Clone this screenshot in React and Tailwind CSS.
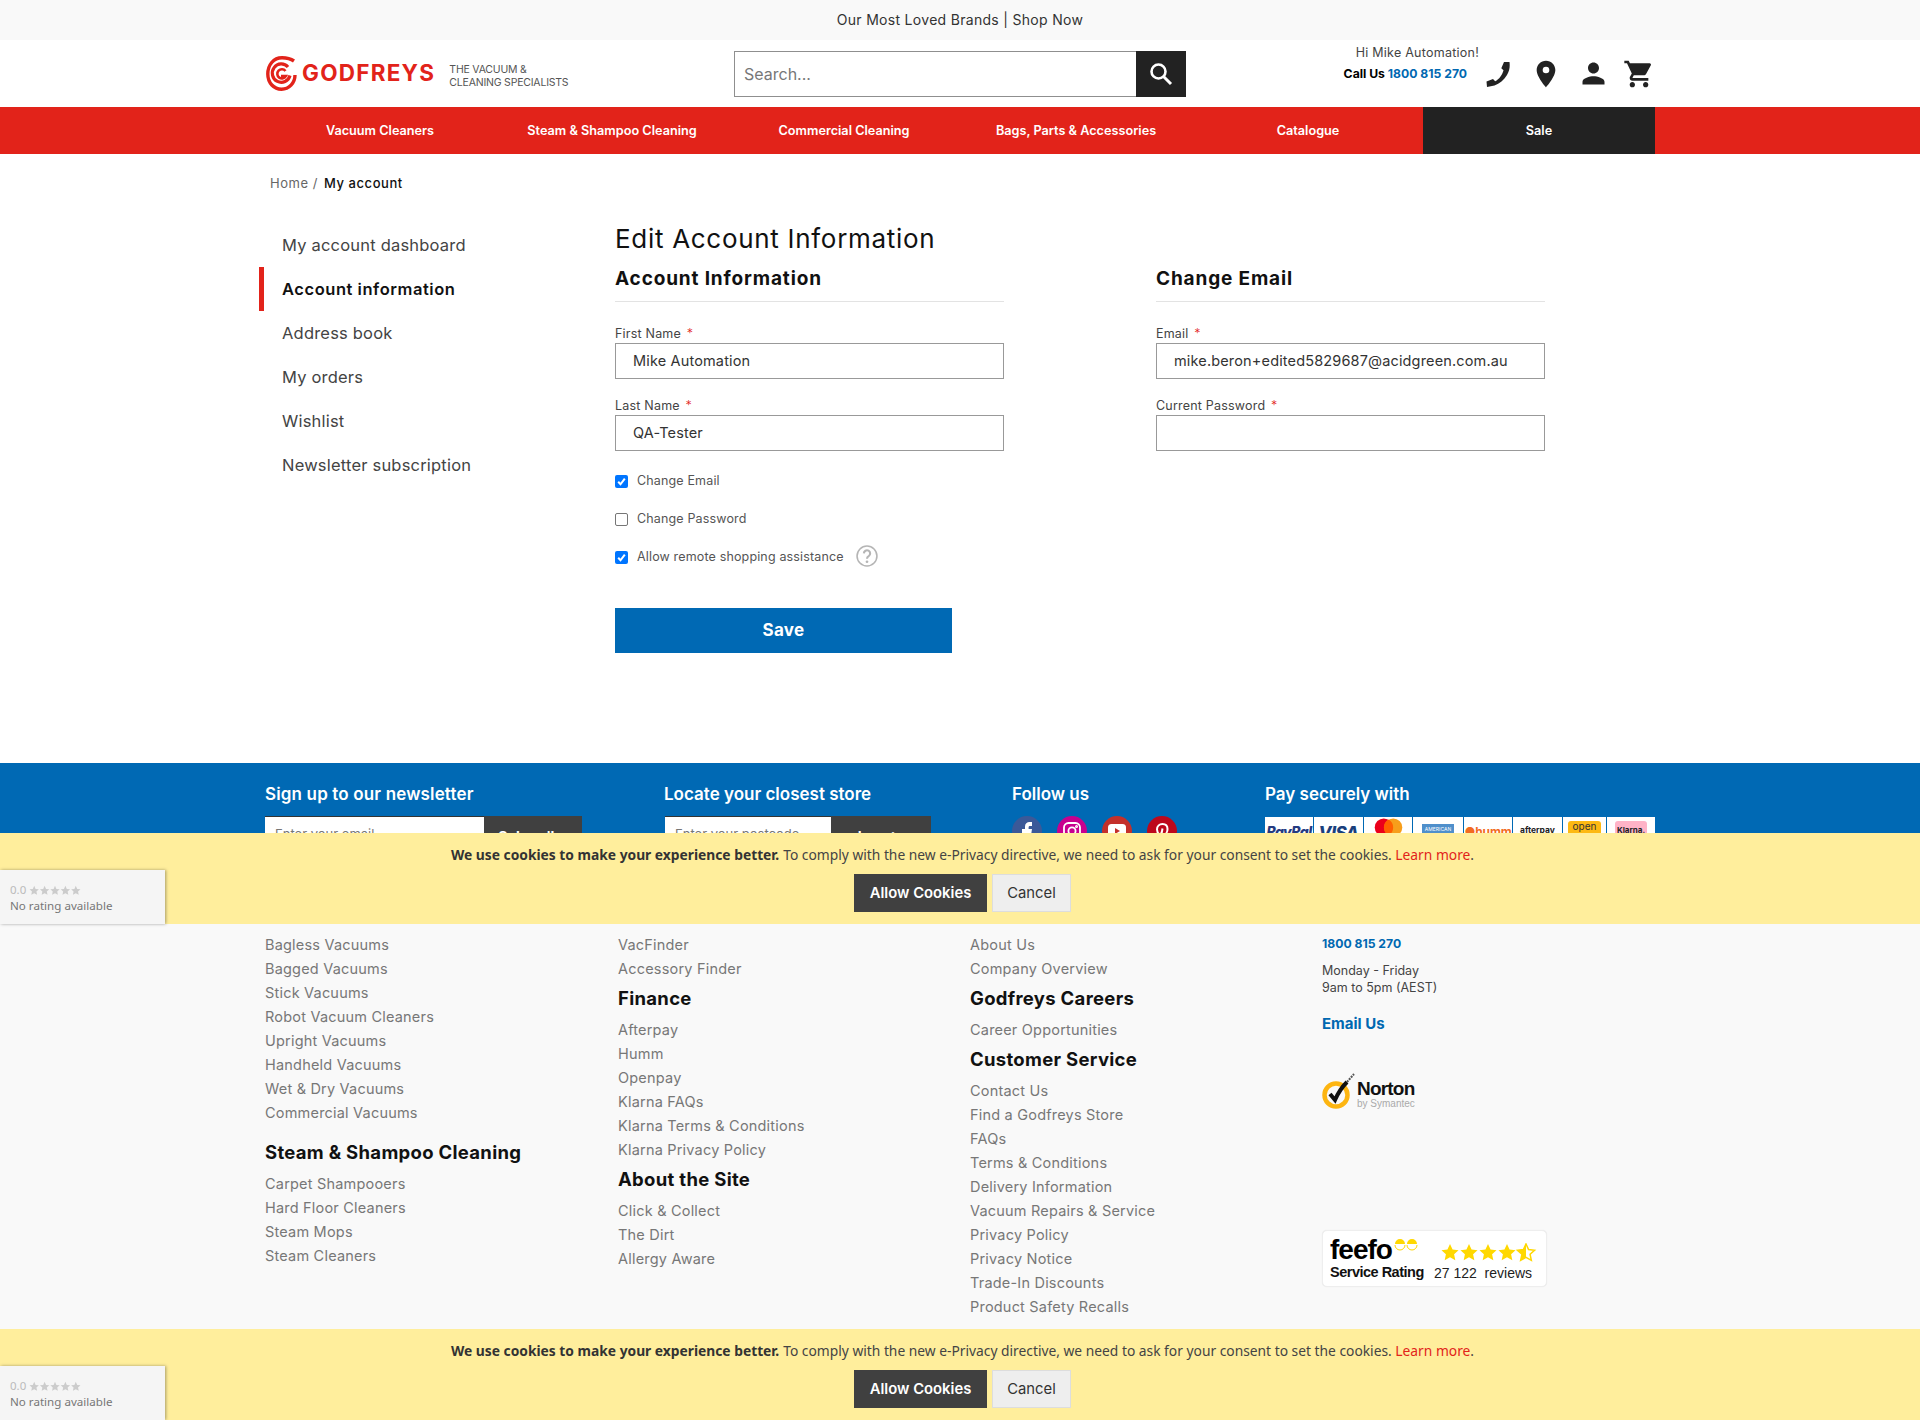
import React from "react";
import { MdLocationOn, MdPerson, MdShoppingCart } from "react-icons/md";

const nav = ["Vacuum Cleaners", "Steam & Shampoo Cleaning", "Commercial Cleaning", "Bags, Parts & Accessories", "Catalogue"];
const side = ["My account dashboard", "Account information", "Address book", "My orders", "Wishlist", "Newsletter subscription"];
const STAR = "M10 1l2.700 5.900 6.300.7-4.700 4.300 1.300 6.300L10 15.100 4.400 18.200l1.300-6.300L1 7.600l6.300-.7z";

function Spiral() {
  return (
    <svg width="31" height="35" viewBox="0 0 31 35" fill="none" stroke="#e2231a">
      <path d="M28 5C24.500 2.500 20 1.700 16 1.700 7.500 1.700 1.800 9 1.800 18 1.800 27 8 33.200 15.500 33.200 23 33.200 29 27 29 19" strokeWidth="3.400" />
      <path d="M24 19.500A9 9.200 0 1 1 22 11" strokeWidth="3.200" />
      <path d="M19.500 15A4.600 4.600 0 1 0 20 20H15" strokeWidth="2.600" />
    </svg>
  );
}

function Phone() {
  return (
    <svg width="24" height="26" viewBox="0 0 24 26" fill="#222">
      <path d="M18 1h5.500c.6 5 0 9-2.500 13-3 5-7.500 8.500-12.500 10.500L1 26l-.5-5.500L7 18l2.200 2.300c4-2 7-6.200 8.300-11L15.300 7.300z" />
    </svg>
  );
}

function Field({ label, value, gap }) {
  return (
    <div className={gap}>
      <div className="h-[20px] pt-[1px] text-[12.5px] leading-[20px] text-[#444] tracking-[0.2px]">
        {label} <span className="text-[#e2231a] ml-[2px] font-light">*</span>
      </div>
      <div className="h-[36px] border border-[#999] px-[17px] pb-[1px] flex items-center text-[14.5px] text-[#333] tracking-[0.15px]">{value}</div>
    </div>
  );
}

function Check({ checked, label, children }) {
  return (
    <div className="h-[38px] flex items-center">
      {checked ? (
        <span className="w-[13px] h-[13px] rounded-[2px] bg-[#0075ff] flex items-center justify-center">
          <svg width="11" height="11" viewBox="0 0 11 11" fill="none" stroke="#fff" strokeWidth="2"><path d="M2.200 5.800 4.500 8.300 8.800 2.600" /></svg>
        </span>
      ) : (
        <span className="w-[13px] h-[13px] rounded-[2px] border border-[#767676] bg-white"></span>
      )}
      <span className="ml-[9px] text-[12.5px] text-[#555] tracking-[0.15px]">{label}</span>
      {children}
    </div>
  );
}

function LinkList({ items }) {
  return items.map((t) => (
    <div key={t} className="h-[24px] leading-[24px] text-[14.5px] tracking-[0.2px] text-[#777]">{t}</div>
  ));
}

function Head({ children, cls }) {
  return <div className={"h-[30px] leading-[30px] text-[18.5px] tracking-[0.3px] font-bold text-[#111] " + cls}>{children}</div>;
}

function CookieBar({ cls }) {
  return (
    <div className={"absolute left-0 right-0 h-[91px] bg-[#ffee9c] flex flex-col items-center " + cls}>
      <div className="h-[44px] pl-[5px] flex items-center text-[13.8px] text-[#444] [font-family:'Noto_Sans',sans-serif]">
        <b className="font-bold text-[#333] mr-[4px]">We use cookies to make your experience better.</b>
        To comply with the new e-Privacy directive, we need to ask for your consent to set the cookies.&nbsp;
        <span className="text-[#e2231a]">Learn more</span>.
      </div>
      <div className="flex mt-[-3px] ml-[5px]">
        <div className="w-[133px] h-[38px] bg-[#404040] text-white text-[14.8px] font-semibold flex items-center justify-center">Allow Cookies</div>
        <div className="ml-[5px] w-[79px] h-[38px] bg-[#eeeeee] border border-[#dddddd] text-[#333] text-[14.8px] flex items-center justify-center">Cancel</div>
      </div>
      <div className="absolute left-0 bottom-0 w-[165px] h-[54px] bg-[#f5f5f5] shadow-[1px_0_3px_rgba(0,0,0,0.35)] pl-[10px] pt-[12px] text-[#777] [font-family:'Noto_Sans',sans-serif]">
        <div className="flex items-center h-[16px] text-[11.5px] text-[#bbb] leading-none">
          0.0
          <svg className="ml-[3px]" width="52" height="11" viewBox="0 0 100 20" fill="#cccccc">
            {[0, 20, 40, 60, 80].map((x) => <path key={x} d={STAR} transform={`translate(${x} 0)`} />)}
          </svg>
        </div>
        <div className="text-[11.6px] leading-[16px]">No rating available</div>
      </div>
    </div>
  );
}

function PayCell({ w, children }) {
  return <div className={"bg-white h-[40px] flex justify-center overflow-hidden shrink-0 " + w}>{children}</div>;
}

export default function App() {
  return (
    <div className="relative h-[1420px] overflow-hidden bg-white [font-family:Inter,sans-serif]">
      {/* top promo */}
      <div className="h-[40px] bg-[#f9f9f9] pb-[2px] flex items-center justify-center text-[14px] tracking-[0.3px] text-[#333]">Our Most Loved Brands | Shop Now</div>

      {/* header */}
      <div className="h-[67px] w-[1390px] mx-auto pl-[1px] relative flex">
        <div className="flex items-center h-[67px]">
          <Spiral />
          <span className="ml-[5px] text-[22.5px] leading-none font-bold tracking-[1.25px] text-[#e2231a]">GODFREYS</span>
          <div className="ml-[14px] mt-[4px] text-[10.5px] leading-[13px] text-[#555] tracking-[-0.2px]">THE VACUUM &amp;<br />CLEANING SPECIALISTS</div>
        </div>
        <div className="absolute left-[469px] top-[11px] w-[452px] h-[46px] border border-[#8f8f8f] flex items-center pl-[9px] text-[16px] text-[#777]">
          Search...
          <div className="absolute right-[-1px] top-[-1px] w-[50px] h-[46px] bg-[#222] flex items-center justify-center">
            <svg width="26" height="26" viewBox="0 0 26 26" fill="none" stroke="#fff" strokeWidth="2.600">
              <circle cx="10.500" cy="10.500" r="7" />
              <path d="M15.500 15.500 23 23" strokeWidth="3" />
            </svg>
          </div>
        </div>
        <div className="absolute right-[176px] top-[3px] w-[170px] text-right">
          <div className="h-[20px] leading-[20px] text-[12.5px] tracking-[0.25px] text-[#444]">Hi Mike Automation!</div>
          <div className="h-[20px] leading-[22px] text-[12.2px] font-bold text-black pr-[12px]">
            Call Us <span className="text-[#0068b1]">1800 815 270</span>
          </div>
        </div>
        <div className="absolute left-[1221px] top-[17px] flex items-center h-[33px] text-[#222]">
          <Phone />
          <MdLocationOn size={32} className="ml-[20px]" />
          <MdPerson size={33} className="ml-[15px]" />
          <MdShoppingCart size={32} className="ml-[13px]" />
        </div>
      </div>

      {/* nav */}
      <div className="h-[47px] bg-[#e2231a]">
        <div className="w-[1392px] ml-[263px] grid grid-cols-6 h-full">
          {nav.map((n) => (
            <div key={n} className="flex items-center justify-center pl-[2px] text-white text-[12.7px] font-semibold">{n}</div>
          ))}
          <div className="flex items-center justify-center bg-[#222] text-white text-[12.7px] font-semibold">Sale</div>
        </div>
      </div>

      {/* breadcrumb */}
      <div className="w-[1390px] mx-auto h-[58px] pl-[5px] pt-[2px] flex items-center text-[13px] tracking-[0.55px]">
        <span className="text-[#666]">Home /</span>
        <span className="ml-[6px] font-medium text-[#111]">My account</span>
      </div>

      {/* main */}
      <div className="h-[551px] flex pl-[259px]">
        <div className="w-[356px] pt-[11px]">
          {side.map((s) => (
            <div
              key={s}
              className={
                "h-[44px] flex items-center pl-[18px] text-[16.5px] " +
                (s === "Account information" ? "border-l-[5px] border-[#e2231a] font-semibold tracking-[0.55px] text-[#111]" : "border-l-[5px] border-transparent tracking-[0.2px] text-[#444]")
              }
            >
              {s}
            </div>
          ))}
        </div>
        <div>
          <h1 className="h-[32px] mt-[11px] leading-[32px] text-[26px] text-[#111] tracking-[0.7px]">Edit Account Information</h1>
          <div className="flex mt-[7px]">
            <div className="w-[389px]">
              <div className="h-[40px] border-b border-[#e3e3e3] text-[19px] leading-[30px] font-bold tracking-[0.85px] text-[#111] pt-[2px]">Account Information</div>
              <Field label="First Name" value="Mike Automation" gap="mt-[21px]" />
              <Field label="Last Name" value="QA-Tester" gap="mt-[16px]" />
              <div className="mt-[10px] pt-[1px]">
                <Check checked label="Change Email" />
                <Check label="Change Password" />
                <Check checked label="Allow remote shopping assistance">
                  <svg className="ml-[12px] mt-[-2px]" width="22" height="22" viewBox="0 0 21 21" fill="none">
                    <circle cx="10.500" cy="10.500" r="9.500" stroke="#b5b5b5" strokeWidth="1.500" />
                    <path d="M7.500 8a3 3 0 1 1 4.600 2.600c-1 .6-1.600 1.200-1.600 2.600" stroke="#b5b5b5" strokeWidth="2" />
                    <circle cx="10.500" cy="16" r="1.300" fill="#b5b5b5" />
                  </svg>
                </Check>
              </div>
              <div className="mt-[32px] w-[337px] h-[45px] pt-[1px] bg-[#0069b4] text-white font-bold text-[17px] tracking-[0.3px] flex items-center justify-center">Save</div>
            </div>
            <div className="w-[389px] ml-[152px]">
              <div className="h-[40px] border-b border-[#e3e3e3] text-[19px] leading-[30px] font-bold tracking-[0.85px] text-[#111] pt-[2px]">Change Email</div>
              <Field label="Email" value="mike.beron+edited5829687@acidgreen.com.au" gap="mt-[21px]" />
              <Field label="Current Password " value="" gap="mt-[16px]" />
            </div>
          </div>
        </div>
      </div>

      {/* blue band */}
      <div className="h-[118px] bg-[#0069b4] pl-[265px] flex text-white">
        <div className="w-[399px]">
          <div className="h-[30px] mt-[16px] leading-[30px] text-[17px] tracking-[0.15px] font-semibold">Sign up to our newsletter</div>
          <div className="mt-[7px] flex h-[42px] w-[317px]">
            <div className="w-[219px] bg-white border-t border-[#333] pl-[10px] pt-[8px] text-[13px] text-[#777]">Enter your email</div>
            <div className="w-[98px] bg-[#404040] text-[14px] font-bold flex justify-center pt-[10px]">Subscribe</div>
          </div>
        </div>
        <div className="w-[348px]">
          <div className="h-[30px] mt-[16px] leading-[30px] text-[17px] font-semibold">Locate your closest store</div>
          <div className="mt-[7px] ml-[1px] flex h-[42px] w-[266px]">
            <div className="w-[166px] bg-white border-t border-[#333] pl-[10px] pt-[8px] text-[13px] text-[#777]">Enter your postcode</div>
            <div className="w-[100px] bg-[#404040] text-[14px] font-bold flex justify-center pt-[10px]">Locate</div>
          </div>
        </div>
        <div className="w-[253px]">
          <div className="h-[30px] mt-[16px] leading-[30px] text-[17px] font-semibold">Follow us</div>
          <div className="mt-[7px] flex gap-[15px]">
            <div className="w-[30px] h-[30px] rounded-full bg-[#3b5998] flex justify-center pt-[5px]">
              <svg width="12" height="22" viewBox="0 0 12 22" fill="#fff"><path d="M4 22V12H1V8h3V5.500C4 2.500 6 1 8.500 1H11v4H9C8 5 7.600 5.500 7.600 6.500V8H11l-.6 4H7.600v10z" /></svg>
            </div>
            <div className="w-[30px] h-[30px] rounded-full bg-[#c8008f] flex justify-center pt-[6px]">
              <svg width="18" height="18" viewBox="0 0 18 18" fill="none" stroke="#fff" strokeWidth="1.800"><rect x="1" y="1" width="16" height="16" rx="4.500" /><circle cx="9" cy="9" r="3.600" /><circle cx="13.500" cy="4.500" r=".6" /></svg>
            </div>
            <div className="w-[30px] h-[30px] rounded-full bg-[#c4302b] flex justify-center pt-[8px]">
              <svg width="18" height="14" viewBox="0 0 18 14"><rect width="18" height="14" rx="3.500" fill="#fff" /><path d="M7 4l5 3-5 3z" fill="#c4302b" /></svg>
            </div>
            <div className="w-[30px] h-[30px] rounded-full bg-[#bd081c] flex justify-center pt-[6px]">
              <svg width="14" height="22" viewBox="0 0 14 22" fill="none" stroke="#fff" strokeWidth="2"><path d="M4.500 13C2.500 11 2 9.500 2 7.500 2 4 4.500 2 7.500 2S12.500 4 12.500 7c0 3-1.500 5.500-4 5.500-1.500 0-2.500-1-2-2.500M7.500 6.500 5 20" /></svg>
            </div>
          </div>
        </div>
        <div>
          <div className="h-[30px] mt-[16px] leading-[30px] text-[17px] font-semibold">Pay securely with</div>
          <div className="mt-[8px] flex gap-[1px] w-[390px]">
            <PayCell w="w-[48px]"><span className="mt-[4px] text-[14px] font-extrabold italic text-[#253b80] tracking-[-0.5px]">PayPal</span></PayCell>
            <PayCell w="w-[49px]"><span className="mt-[4px] text-[17px] font-extrabold italic text-[#1a3f7c] tracking-[-0.5px]">VISA</span></PayCell>
            <PayCell w="w-[48px]">
              <svg width="29" height="19" viewBox="0 0 30 20" className="mt-[1px]"><circle cx="10" cy="10" r="9.500" fill="#eb001b" /><circle cx="20" cy="10" r="9.500" fill="#f79e1b" /><path d="M15 1.700a9.500 9.500 0 0 1 0 16.600a9.500 9.500 0 0 1 0-16.600" fill="#ff5f00" /></svg>
            </PayCell>
            <PayCell w="w-[50px]"><div className="mt-[7px] w-[32px] h-[30px] bg-[#4f8fcb] text-white text-[5px] text-center leading-[6px] pt-[2px]">AMERICAN<br />EXPRESS</div></PayCell>
            <PayCell w="w-[48px]"><span className="mt-[6px] text-[12px] font-bold text-[#f26b21] tracking-[-0.2px]">●humm</span></PayCell>
            <PayCell w="w-[49px]"><span className="mt-[7px] text-[8.5px] font-bold text-[#222]">afterpay</span></PayCell>
            <PayCell w="w-[43px]"><div className="mt-[4px] w-[33px] h-[30px] rounded-[3px] bg-[#fdb913] text-[#333] text-[10px] text-center leading-[10px]">open<br />pay</div></PayCell>
            <PayCell w="w-[48px]"><div className="mt-[4px] w-[32px] h-[30px] rounded-[3px] bg-[#ffb3c7] text-[#222] text-[8px] font-bold text-center pt-[3px]">Klarna.</div></PayCell>
          </div>
        </div>
      </div>

      {/* footer */}
      <div className="h-[539px] bg-[#f9f9f9] pl-[265px] pt-[52px] grid grid-cols-[353px_352px_352px_1fr]">
        <div>
          <LinkList items={["Bagless Vacuums", "Bagged Vacuums", "Stick Vacuums", "Robot Vacuum Cleaners", "Upright Vacuums", "Handheld Vacuums", "Wet & Dry Vacuums", "Commercial Vacuums"]} />
          <Head cls="mt-[12px] mb-[5px]">Steam &amp; Shampoo Cleaning</Head>
          <LinkList items={["Carpet Shampooers", "Hard Floor Cleaners", "Steam Mops", "Steam Cleaners"]} />
        </div>
        <div>
          <LinkList items={["VacFinder", "Accessory Finder"]} />
          <Head cls="mt-[2px] mb-[5px]">Finance</Head>
          <LinkList items={["Afterpay", "Humm", "Openpay", "Klarna FAQs", "Klarna Terms & Conditions", "Klarna Privacy Policy"]} />
          <Head cls="mt-[2px] mb-[5px]">About the Site</Head>
          <LinkList items={["Click & Collect", "The Dirt", "Allergy Aware"]} />
        </div>
        <div>
          <LinkList items={["About Us", "Company Overview"]} />
          <Head cls="mt-[2px] mb-[5px]">Godfreys Careers</Head>
          <LinkList items={["Career Opportunities"]} />
          <Head cls="mt-[2px] mb-[5px]">Customer Service</Head>
          <LinkList items={["Contact Us", "Find a Godfreys Store", "FAQs", "Terms & Conditions", "Delivery Information", "Vacuum Repairs & Service", "Privacy Policy", "Privacy Notice", "Trade-In Discounts", "Product Safety Recalls"]} />
        </div>
        <div>
          <div className="h-[22px] leading-[22px] text-[12.2px] font-bold text-[#0068b1]">1800 815 270</div>
          <div className="mt-[7px] text-[12.5px] leading-[17px] text-[#444]">Monday - Friday<br />9am to 5pm (AEST)</div>
          <div className="mt-[18px] h-[20px] leading-[20px] text-[15px] font-bold text-[#0068b1]">Email Us</div>
          <div className="mt-[39px] flex items-end h-[37px] w-[100px]">
            <svg width="34" height="37" viewBox="0 0 34 37" fill="none">
              <circle cx="14" cy="22" r="11.500" stroke="#fdb511" strokeWidth="4.500" />
              <path d="M8 21l5 6C16 20 20 14 25 9" stroke="#111" strokeWidth="4" />
              <path d="M25 9 32 1" stroke="#555" strokeWidth="2" strokeDasharray="2 1" />
            </svg>
            <div className="ml-[1px] leading-none mb-[1px]">
              <div className="text-[19px] font-bold text-[#111] tracking-[-0.8px] [font-family:'Liberation_Sans',sans-serif]">Norton</div>
              <div className="text-[10px] text-[#aaa] mt-[1px] [font-family:'Liberation_Sans',sans-serif]">by Symantec</div>
            </div>
          </div>
          <div className="mt-[120px] w-[225px] h-[57px] bg-white border border-[#eee] rounded-[5px] relative [font-family:'Liberation_Sans',sans-serif] shadow-[0_0_1px_rgba(0,0,0,0.1)]">
            <div className="absolute left-[7px] top-[3px] text-[28px] leading-[32px] font-bold text-black tracking-[-1px]">feefo</div>
            <svg className="absolute left-[71px] top-[8px]" width="24" height="12" viewBox="0 0 24 12" fill="#ffd800"><path d="M1 5a5 5 0 0 1 10 0zM13 5a5 5 0 0 1 10 0z" /><path d="M1 6a5 5 0 0 0 10 0M13 6a5 5 0 0 0 10 0" fill="none" stroke="#ffd800" /></svg>
            <div className="absolute left-[7px] top-[32px] text-[14.5px] leading-[18px] font-bold text-[#111] tracking-[-0.5px]">Service Rating</div>
            <svg className="absolute left-[116px] top-[12px]" width="98" height="19" viewBox="0 0 100 20">
              {[0, 20, 40, 60].map((x) => <path key={x} d={STAR} fill="#ffd800" transform={`translate(${x} 0)`} />)}
              <path d={STAR} transform="translate(80 0)" fill="none" stroke="#ffd800" strokeWidth="1.600" />
              <path d="M10 1l-2.700 5.900L1 7.600l4.700 4.300-1.300 6.300L10 15.100z" transform="translate(80 0)" fill="#ffd800" />
            </svg>
            <div className="absolute left-[111px] top-[33px] text-[14px] leading-[18px] text-[#222]">27 122 &nbsp;reviews</div>
          </div>
        </div>
      </div>

      <CookieBar cls="top-[833px]" />
      <CookieBar cls="top-[1329px]" />
    </div>
  );
}
